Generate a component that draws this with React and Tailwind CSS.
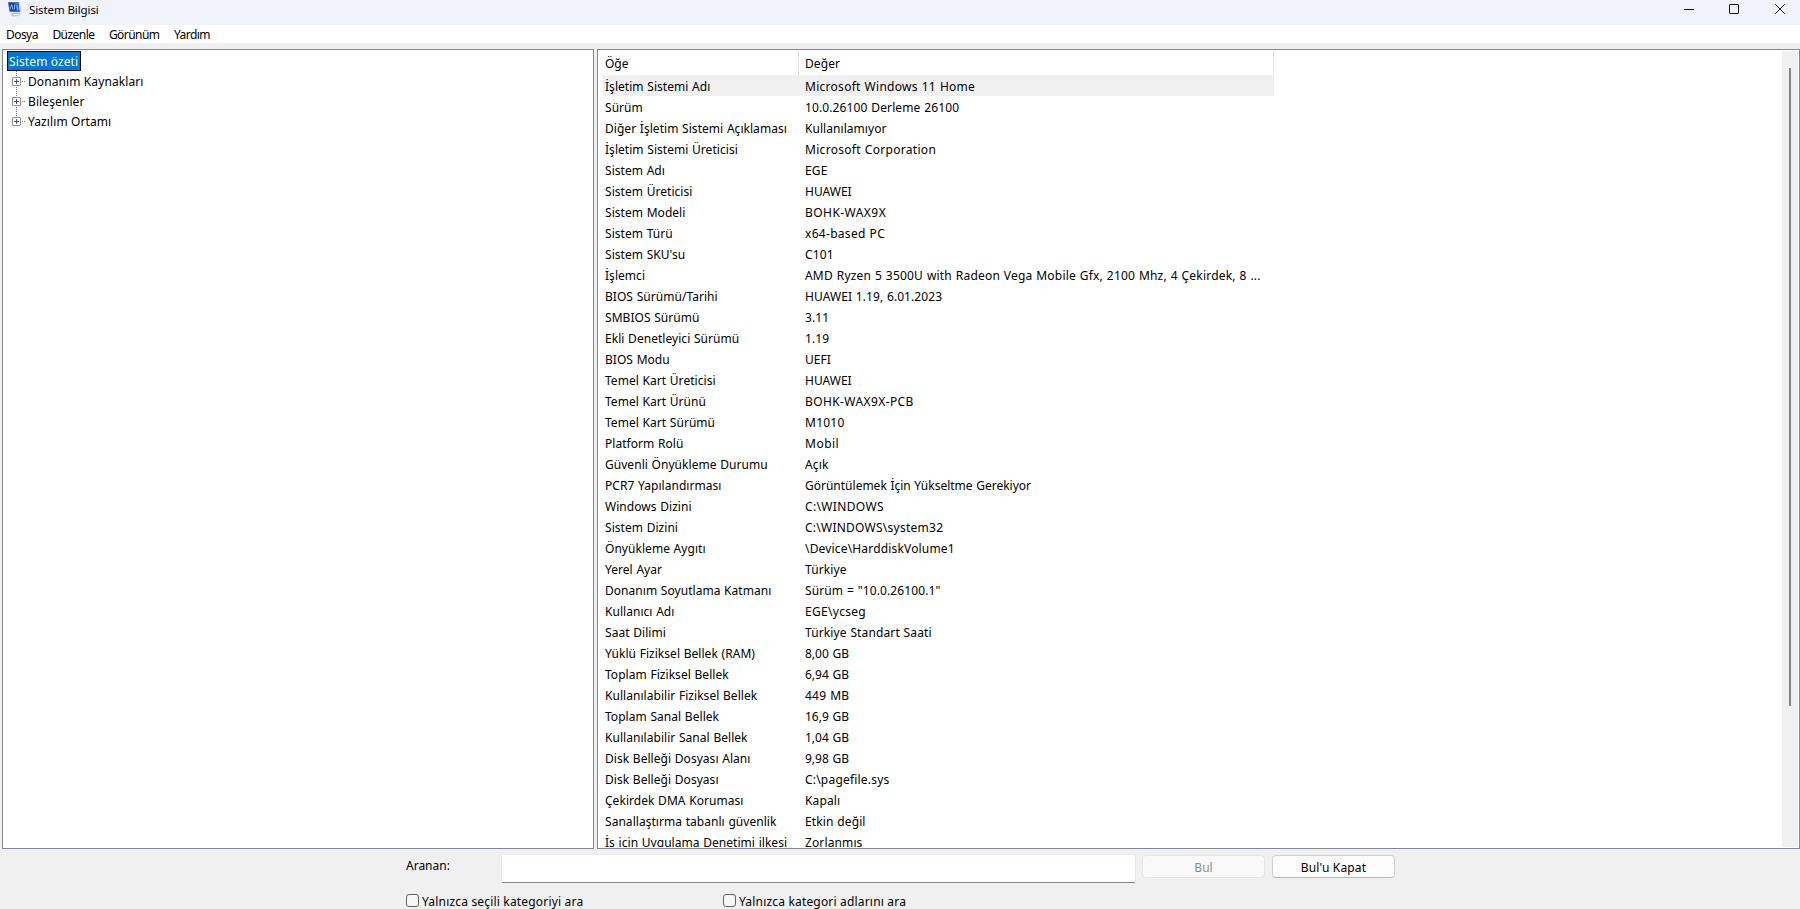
const menus = ["Dosya", "Düzenle", "Görünüm", "Yardım"]

const categories = ["Donanım Kaynakları", "Bileşenler", "Yazılım Ortamı"]

// [item, value, letter spacing of the value]
const rows = [
  ["İşletim Sistemi Adı", "Microsoft Windows 11 Home", "tracking-[0.28px]"],
  ["Sürüm", "10.0.26100 Derleme 26100"],
  ["Diğer İşletim Sistemi Açıklaması", "Kullanılamıyor", "tracking-[0.05px]"],
  ["İşletim Sistemi Üreticisi", "Microsoft Corporation", "tracking-[0.3px]"],
  ["Sistem Adı", "EGE"],
  ["Sistem Üreticisi", "HUAWEI", "tracking-normal"],
  ["Sistem Modeli", "BOHK-WAX9X", "tracking-[0.45px]"],
  ["Sistem Türü", "x64-based PC", "tracking-[0.3px]"],
  ["Sistem SKU'su", "C101"],
  ["İşlemci", "AMD Ryzen 5 3500U with Radeon Vega Mobile Gfx, 2100 Mhz, 4 Çekirdek, 8 ...", "tracking-[0.2px]"],
  ["BIOS Sürümü/Tarihi", "HUAWEI 1.19, 6.01.2023", "tracking-[0.08px]"],
  ["SMBIOS Sürümü", "3.11"],
  ["Ekli Denetleyici Sürümü", "1.19"],
  ["BIOS Modu", "UEFI", "tracking-normal"],
  ["Temel Kart Üreticisi", "HUAWEI", "tracking-normal"],
  ["Temel Kart Ürünü", "BOHK-WAX9X-PCB", "tracking-[0.4px]"],
  ["Temel Kart Sürümü", "M1010", "tracking-[0.25px]"],
  ["Platform Rolü", "Mobil", "tracking-[0.5px]"],
  ["Güvenli Önyükleme Durumu", "Açık"],
  ["PCR7 Yapılandırması", "Görüntülemek İçin Yükseltme Gerekiyor", "tracking-normal"],
  ["Windows Dizini", "C:\\WINDOWS", "tracking-[0.35px]"],
  ["Sistem Dizini", "C:\\WINDOWS\\system32", "tracking-[0.25px]"],
  ["Önyükleme Aygıtı", "\\Device\\HarddiskVolume1", "tracking-[0.17px]"],
  ["Yerel Ayar", "Türkiye"],
  ["Donanım Soyutlama Katmanı", 'Sürüm = "10.0.26100.1"'],
  ["Kullanıcı Adı", "EGE\\ycseg", "tracking-[0.3px]"],
  ["Saat Dilimi", "Türkiye Standart Saati"],
  ["Yüklü Fiziksel Bellek (RAM)", "8,00 GB", "tracking-normal"],
  ["Toplam Fiziksel Bellek", "6,94 GB", "tracking-normal"],
  ["Kullanılabilir Fiziksel Bellek", "449 MB", "tracking-[0.25px]"],
  ["Toplam Sanal Bellek", "16,9 GB", "tracking-normal"],
  ["Kullanılabilir Sanal Bellek", "1,04 GB", "tracking-normal"],
  ["Disk Belleği Dosyası Alanı", "9,98 GB", "tracking-normal"],
  ["Disk Belleği Dosyası", "C:\\pagefile.sys", "tracking-[0.2px]"],
  ["Çekirdek DMA Koruması", "Kapalı"],
  ["Sanallaştırma tabanlı güvenlik", "Etkin değil"],
  ["İş için Uygulama Denetimi ilkesi", "Zorlanmış"],
]

const AppIcon = () => (
  <svg width="16" height="16" viewBox="0 0 16 16">
    <path d="M5 12l6-1 3 2-2 2-6 .5-2.500-1.500z" fill="#c6c9cf" />
    <path d="M6 13.500l5-.8 1 .8-1.500 1z" fill="#eceef2" />
    <path d="M1 1.200L12.500 1 14.500 10.500 12.500 12 3 11.500z" fill="#c3cbe0" />
    <path d="M1.200 1.200L11.500 1.500 12.500 10.800 2.500 10.500z" fill="#1c3cae" />
    <path d="M8 1.400l3.500.1 1 9.300-3-.1z" fill="#3f6fd8" />
    <path d="M3 8.500L4.500 3.500 6 8.500M7.500 3.500V8.500M9.500 4.500L11 8.500" fill="none" stroke="#8fb6f2" />
  </svg>
)

const TitleBar = () => (
  <div className="flex h-[25px] shrink-0 items-start bg-[#f0f3f9]">
    <div className="flex pl-[7px] pt-px">
      <AppIcon />
    </div>
    <div className="ml-[6px] mt-[2px] text-[11.500px] leading-4 tracking-[-0.1px]">Sistem Bilgisi</div>
    <svg className="ml-auto mr-[14px] mt-1" width="102" height="10" viewBox="0 0 102 10" fill="none" stroke="#111">
      <path d="M0 5.500H10" />
      <rect x="45.500" y="0.500" width="9" height="9" rx="0.500" />
      <path d="M91.300 0.300L100.700 9.700M100.700 0.300L91.300 9.700" />
    </svg>
  </div>
)

const MenuBar = () => (
  <div className="flex h-[18px] shrink-0 items-center gap-[14.500px] bg-white pl-[6px] pt-[2px] tracking-[-0.55px]">
    {menus.map((menu) => (
      <span key={menu}>{menu}</span>
    ))}
  </div>
)

const TreeItem = ({ label, last }) => (
  <div className="flex h-5 items-center">
    <svg className="mr-[2px] shrink-0" width="14" height="20" viewBox="0 0 14 20" fill="none">
      <path d={last ? "M4.500 0V6" : "M4.500 0V20"} stroke="#808080" strokeDasharray="1 1" />
      <path d="M10 10.500H14" stroke="#808080" strokeDasharray="1 1" />
      <rect x="0.500" y="6.500" width="8" height="8" rx="0.500" fill="#fff" stroke="#919191" />
      <path d="M2 10.500H7M4.500 8V13" stroke="#3a4f9a" />
    </svg>
    <span className="pt-[2px] tracking-[0.1px]">{label}</span>
  </div>
)

const Tree = () => (
  <div className="w-[592px] border border-[#828790] bg-white pl-1 pt-px">
    <div className="flex h-5 w-[74px] items-center border border-black bg-[#0078d7] pl-px text-white">
      <span className="whitespace-nowrap pt-[2px] tracking-[0.12px]">Sistem özeti</span>
    </div>
    <div className="pl-[5px]">
      {categories.map((label, i) => (
        <TreeItem key={label} label={label} last={i === categories.length - 1} />
      ))}
    </div>
  </div>
)

const DetailList = () => (
  <div className="flex w-[1203px] overflow-hidden border border-[#828790] bg-white pl-[5px] pt-px">
    <div className="h-[796px] w-[671px] overflow-hidden">
      <div className="flex h-6">
        <div className="flex w-[196px] items-center border-r border-[#e2e2e2] pl-[2px] pt-[2px]">Öğe</div>
        <div className="flex flex-1 items-center border-r border-[#e2e2e2] pl-[6px] pt-[2px] tracking-[0.1px]">Değer</div>
      </div>
      {rows.map(([item, value, tracking = "tracking-[0.12px]"], i) => (
        <div
          key={item}
          className={`flex h-[21px] items-center whitespace-nowrap pt-[2px] [word-spacing:0.5px] ${i === 0 ? "bg-[#f0f0f0]" : ""}`}
        >
          <div className="w-[200px] pl-[2px] tracking-[0.04px]">{item}</div>
          <div className={`pl-[2px] ${tracking}`}>{value}</div>
        </div>
      ))}
    </div>
    {/* Scrollbar */}
    <div className="ml-auto mr-px h-[796px] w-4 bg-[#f0f0f0] pl-[7px] pt-[17px]">
      <div className="h-[638px] w-[2px] bg-[#858585]" />
    </div>
  </div>
)

const CheckOption = ({ label }) => (
  <label className="flex w-[317px] items-center gap-[3px]">
    <span className="h-[13px] w-[13px] rounded-[3px] border border-[#626262] bg-[#f6f6f6]" />
    <span className="pt-[3px] tracking-[0.18px]">{label}</span>
  </label>
)

const FindBar = () => (
  <div className="h-[60px] shrink-0 pl-[406px] pt-[5px]">
    <div className="flex h-[30px] items-start">
      <div className="w-[95px] pt-[3px] leading-[18px]">Aranan:</div>
      <input
        type="text"
        className="h-[29px] w-[635px] rounded-[2px] border border-[#e9e9e9] border-b-[#868686] bg-white px-1 outline-none"
      />
      <button className="ml-[6px] mt-px h-[23px] w-[123px] rounded-[4px] border border-[#e6e6e6] bg-[#f9f9f9] pt-[2px] text-[#8d8d8d]">
        Bul
      </button>
      <button className="ml-[7px] mt-px h-[23px] w-[123px] rounded-[4px] border border-[#d0d0d0] border-b-[#b8b8b8] bg-[#fdfdfd] pt-[2px] tracking-[0.15px]">
        Bul'u Kapat
      </button>
    </div>
    <div className="mt-[7px] flex h-[18px] items-center">
      <CheckOption label="Yalnızca seçili kategoriyi ara" />
      <CheckOption label="Yalnızca kategori adlarını ara" />
    </div>
  </div>
)

export default function App() {
  return (
    <div className="flex h-[909px] w-[1800px] flex-col overflow-hidden bg-[#f0f0f0] font-['Noto_Sans','Open_Sans',sans-serif] text-[12px] leading-4 text-black">
      <TitleBar />
      <MenuBar />
      <div className="mt-[6px] flex h-[800px] shrink-0 gap-[3px] pl-[2px]">
        <Tree />
        <DetailList />
      </div>
      <FindBar />
    </div>
  )
}
